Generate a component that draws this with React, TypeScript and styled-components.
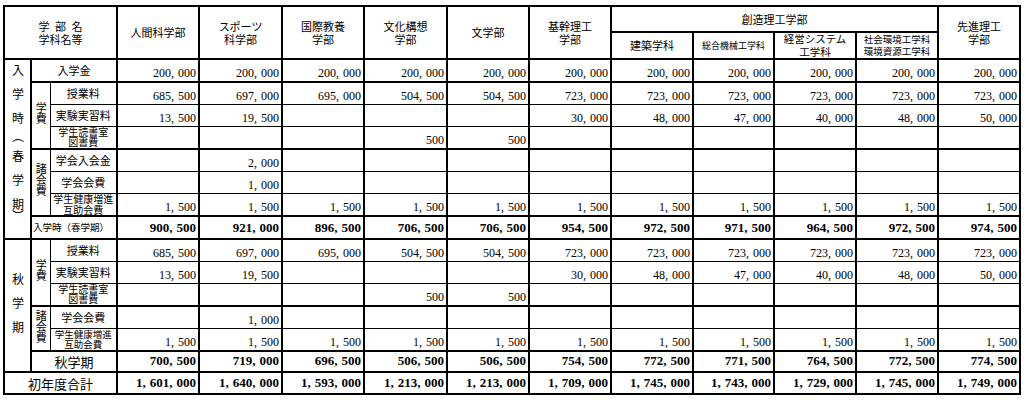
import React from 'react';
import styled, { createGlobalStyle } from 'styled-components';

const LINE = '#000';

const GlobalStyle = createGlobalStyle`
  html, body { margin: 0; background: #fff; }
  body {
    padding: 5px 0 0 3px;
    color: #000;
    font-family: "Noto Sans CJK JP", "Noto Sans", sans-serif;
  }
`;

const Sheet = styled.table`
  border-collapse: collapse;
  table-layout: fixed;
  width: 1016px;
  border: 2px solid ${LINE};
`;

const Col = styled.col<{ $w: number }>`
  width: ${p => p.$w}px;
`;

const Row = styled.tr<{ $h: number }>`
  height: ${p => p.$h}px;
`;

const HeadCell = styled.th<{ $size?: number }>`
  border: 2px solid ${LINE};
  padding: 0;
  font-weight: 400;
  font-size: ${p => p.$size ?? 11}px;
  line-height: ${p => (p.$size ?? 11) + 2}px;
  text-align: center;
  vertical-align: middle;
  white-space: nowrap;
`;

const WideWords = styled.span`
  word-spacing: 3px;
`;

const PeriodCell = styled.td<{ $pad?: number }>`
  border: 2px solid ${LINE};
  border-bottom: none;
  padding: 0 0 ${p => p.$pad ?? 0}px;
  text-align: center;
  vertical-align: middle;
`;

const PeriodText = styled.span`
  display: inline-block;
  writing-mode: vertical-rl;
  font-size: 12px;
  line-height: 1;
  letter-spacing: 12px;
`;

const Spaced = styled.span<{ $gap: number }>`
  letter-spacing: ${p => p.$gap}px;
`;

const HalfParen = styled.span<{ $gap: number }>`
  font-feature-settings: "vhal" 1;
  letter-spacing: ${p => p.$gap}px;
`;

const GroupCell = styled.td`
  border-left: 2px solid ${LINE};
  border-right: 1px solid ${LINE};
  border-top: 2px solid ${LINE};
  border-bottom: none;
  padding: 0;
  text-align: center;
  vertical-align: middle;
`;

const GroupText = styled.span`
  display: inline-block;
  writing-mode: vertical-rl;
  font-size: 11px;
  line-height: 1;
`;

const LabelCell = styled.td<{ $thin?: boolean; $size?: number; $inGroup?: boolean; $left?: boolean; $pair?: boolean }>`
  border-left: ${p => (p.$inGroup ? 1 : 2)}px solid ${LINE};
  border-right: 2px solid ${LINE};
  border-top: ${p => (p.$thin ? 1 : 2)}px solid ${LINE};
  border-bottom: none;
  padding: ${p => (p.$left ? '0 0 0 1px' : '0')};
  font-size: ${p => p.$size ?? 11}px;
  line-height: ${p => (p.$pair ? '10.5px' : `${(p.$size ?? 11) + 2}px`)};
  text-align: ${p => (p.$left ? 'left' : 'center')};
  vertical-align: middle;
  white-space: nowrap;
`;

const AmountCell = styled.td<{ $thin?: boolean; $total?: boolean }>`
  border-left: 2px solid ${LINE};
  border-right: 2px solid ${LINE};
  border-top: ${p => (p.$thin ? 1 : 2)}px solid ${LINE};
  border-bottom: none;
  padding: 0 2px ${p => (p.$total ? 3 : 1)}px 0;
  font-family: "Liberation Serif", "Times New Roman", serif;
  font-size: ${p => (p.$total ? 13 : 12)}px;
  font-weight: ${p => (p.$total ? 700 : 400)};
  line-height: 14px;
  text-align: right;
  vertical-align: bottom;
  white-space: nowrap;
`;

const Comma = styled.span`
  margin-right: 4px;
`;

const COL_WIDTHS = [27, 19, 67, 82, 83, 82, 83, 82, 82, 82, 81, 82, 82, 82];

const blank = (...filled: [number, string][]) => {
  const row = Array<string>(11).fill('');
  filled.forEach(([i, v]) => (row[i] = v));
  return row;
};

const ENTRANCE = Array<string>(11).fill('200,000');
const TUITION = ['685,500', '697,000', '695,000', '504,500', '504,500', '723,000', '723,000', '723,000', '723,000', '723,000', '723,000'];
const LAB = ['13,500', '19,500', '', '', '', '30,000', '48,000', '47,000', '40,000', '48,000', '50,000'];
const LIBRARY = blank([3, '500'], [4, '500']);
const JOIN = blank([1, '2,000']);
const SOCIETY = blank([1, '1,000']);
const HEALTH = Array<string>(11).fill('1,500');
const SPRING_TOTAL = ['900,500', '921,000', '896,500', '706,500', '706,500', '954,500', '972,500', '971,500', '964,500', '972,500', '974,500'];
const AUTUMN_TOTAL = ['700,500', '719,000', '696,500', '506,500', '506,500', '754,500', '772,500', '771,500', '764,500', '772,500', '774,500'];
const YEAR_TOTAL = ['1,601,000', '1,640,000', '1,593,000', '1,213,000', '1,213,000', '1,709,000', '1,745,000', '1,743,000', '1,729,000', '1,745,000', '1,749,000'];

function Amount({ value }: { value: string }) {
  const parts = value.split(',');
  return (
    <>
      {parts.map((p, i) => (
        <React.Fragment key={i}>
          {p}
          {i < parts.length - 1 && <Comma>,</Comma>}
        </React.Fragment>
      ))}
    </>
  );
}

function Amounts({ values, thin, total }: { values: string[]; thin?: boolean; total?: boolean }) {
  return (
    <>
      {values.map((v, i) => (
        <AmountCell key={i} $thin={thin} $total={total}>
          {v && <Amount value={v} />}
        </AmountCell>
      ))}
    </>
  );
}

function Lines({ lines }: { lines: string[] }) {
  return (
    <>
      {lines.map((l, i) => (
        <React.Fragment key={i}>
          {i > 0 && <br />}
          {l}
        </React.Fragment>
      ))}
    </>
  );
}

const DEPTS: string[][] = [
  ['人間科学部'],
  ['スポーツ', '科学部'],
  ['国際教養', '学部'],
  ['文化構想', '学部'],
  ['文学部'],
  ['基幹理工', '学部'],
];

const SUB_DEPTS: { lines: string[]; size: number }[] = [
  { lines: ['建築学科'], size: 11 },
  { lines: ['総合機械工学科'], size: 9 },
  { lines: ['経営システム', '工学科'], size: 10.5 },
  { lines: ['社会環境工学科', '環境資源工学科'], size: 9.5 },
];

export default function App() {
  return (
    <>
      <GlobalStyle />
      <Sheet>
        <colgroup>
          {COL_WIDTHS.map((w, i) => (
            <Col key={i} $w={w} />
          ))}
        </colgroup>
        <thead>
          <Row $h={26}>
            <HeadCell colSpan={3} rowSpan={2}>
              <WideWords>学 部 名</WideWords>
              <br />
              学科名等
            </HeadCell>
            {DEPTS.map((d, i) => (
              <HeadCell key={i} rowSpan={2}>
                <Lines lines={d} />
              </HeadCell>
            ))}
            <HeadCell colSpan={4}>創造理工学部</HeadCell>
            <HeadCell rowSpan={2}>
              <Lines lines={['先進理工', '学部']} />
            </HeadCell>
          </Row>
          <Row $h={24}>
            {SUB_DEPTS.map((d, i) => (
              <HeadCell key={i} $size={d.size}>
                <Lines lines={d.lines} />
              </HeadCell>
            ))}
          </Row>
        </thead>
        <tbody>
          <Row $h={23}>
            <PeriodCell rowSpan={8} $pad={14}>
              <PeriodText>
                入学時
                <HalfParen $gap={8}>（</HalfParen>
                春学
                <Spaced $gap={0}>期</Spaced>
                <HalfParen $gap={0}>）</HalfParen>
              </PeriodText>
            </PeriodCell>
            <LabelCell colSpan={2}>入学金</LabelCell>
            <Amounts values={ENTRANCE} />
          </Row>
          <Row $h={22}>
            <GroupCell rowSpan={3}>
              <GroupText>学費</GroupText>
            </GroupCell>
            <LabelCell $inGroup>授業料</LabelCell>
            <Amounts values={TUITION} />
          </Row>
          <Row $h={22}>
            <LabelCell $inGroup $thin>実験実習料</LabelCell>
            <Amounts values={LAB} thin />
          </Row>
          <Row $h={22}>
            <LabelCell $inGroup $thin $pair $size={10}>
              学生読書室
              <br />
              図書費
            </LabelCell>
            <Amounts values={LIBRARY} thin />
          </Row>
          <Row $h={23}>
            <GroupCell rowSpan={3}>
              <GroupText>諸会費</GroupText>
            </GroupCell>
            <LabelCell $inGroup>学会入会金</LabelCell>
            <Amounts values={JOIN} />
          </Row>
          <Row $h={22}>
            <LabelCell $inGroup $thin>学会会費</LabelCell>
            <Amounts values={SOCIETY} thin />
          </Row>
          <Row $h={22}>
            <LabelCell $inGroup $thin $pair $size={10}>
              学生健康増進
              <br />
              互助会費
            </LabelCell>
            <Amounts values={HEALTH} thin />
          </Row>
          <Row $h={23}>
            <LabelCell colSpan={2} $size={9.5} $left>
              入学時（春学期）
            </LabelCell>
            <Amounts values={SPRING_TOTAL} total />
          </Row>

          <Row $h={22}>
            <PeriodCell rowSpan={6}>
              <PeriodText>
                秋学<Spaced $gap={0}>期</Spaced>
              </PeriodText>
            </PeriodCell>
            <GroupCell rowSpan={3}>
              <GroupText>学費</GroupText>
            </GroupCell>
            <LabelCell $inGroup>授業料</LabelCell>
            <Amounts values={TUITION} />
          </Row>
          <Row $h={22}>
            <LabelCell $inGroup $thin>実験実習料</LabelCell>
            <Amounts values={LAB} thin />
          </Row>
          <Row $h={23}>
            <LabelCell $inGroup $thin $pair $size={10}>
              学生読書室
              <br />
              図書費
            </LabelCell>
            <Amounts values={LIBRARY} thin />
          </Row>
          <Row $h={22}>
            <GroupCell rowSpan={2}>
              <GroupText>諸会費</GroupText>
            </GroupCell>
            <LabelCell $inGroup>学会会費</LabelCell>
            <Amounts values={SOCIETY} />
          </Row>
          <Row $h={23}>
            <LabelCell $inGroup $thin $pair $size={9.5}>
              学生健康増進
              <br />
              互助会費
            </LabelCell>
            <Amounts values={HEALTH} thin />
          </Row>
          <Row $h={21}>
            <LabelCell colSpan={2} $size={13}>
              秋学期
            </LabelCell>
            <Amounts values={AUTUMN_TOTAL} total />
          </Row>
          <Row $h={22}>
            <LabelCell colSpan={3} $size={13}>
              初年度合計
            </LabelCell>
            <Amounts values={YEAR_TOTAL} total />
          </Row>
        </tbody>
      </Sheet>
    </>
  );
}
